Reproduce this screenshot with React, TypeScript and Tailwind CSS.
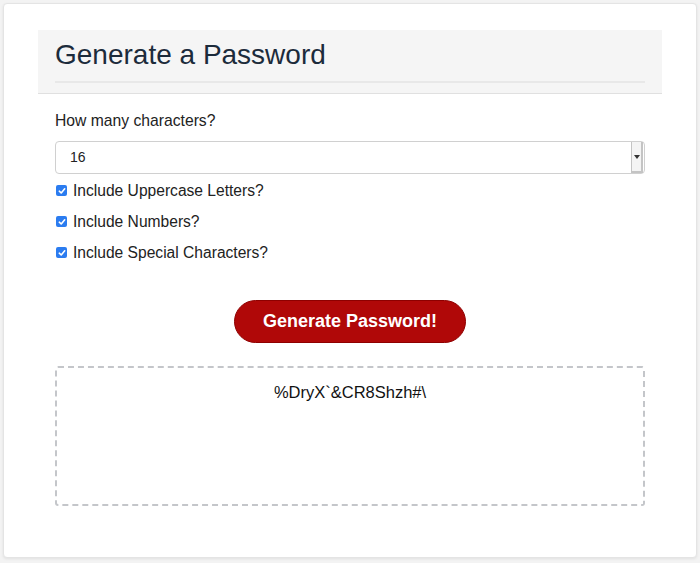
import React from "react";

const options = [
  "Include Uppercase Letters?",
  "Include Numbers?",
  "Include Special Characters?",
];

function Check() {
  return (
    <span className="flex h-[11px] w-[11px] items-center justify-center rounded-[2px] bg-[#2b7cf0]">
      <svg width="8" height="8" viewBox="0 0 8 8">
        <path d="M1.3 4.2 L3.2 6 L6.7 1.8" fill="none" stroke="#fff" strokeWidth="1.6" strokeLinecap="round" strokeLinejoin="round" />
      </svg>
    </span>
  );
}

export default function App() {
  return (
    <div className="min-h-[563px] w-[700px] bg-[#f3f3f3] p-[3px] font-['Liberation_Sans',Arial,sans-serif] text-[#222]">
      <div className="h-[555px] rounded-[4px] border border-[#e4e4e4] bg-white px-[34px] pt-[26px] shadow-[0_1px_3px_rgba(0,0,0,0.08)]">
        <div className="border-b border-[#e0e0e0] bg-[#f5f5f5] px-[17px] pt-[9px] pb-[10px]">
          <h1 className="text-[28px] leading-[31px] text-[#1c2b3b]">Generate a Password</h1>
          <div className="mt-[11px] h-[2px] bg-[#e8e8e8]" />
        </div>

        <div className="px-[17px] pt-[16px]">
          <div className="text-[15.7px] leading-[21px] text-[#222]">How many characters?</div>
          <div className="mt-[10px] flex h-[33px] items-center rounded-[4px] border border-[#d0d0d0] bg-white pl-[14px] pr-[1px]">
            <span className="flex-1 text-[14px] text-[#222]">16</span>
            <span className="flex h-[31px] w-[12px] items-center justify-center border-l border-r-2 border-b-2 border-[#c4c4c4] bg-[#f4f4f4]">
              <svg width="6" height="4" viewBox="0 0 6 4">
                <path d="M0 0 L6 0 L3 4 Z" fill="#333" />
              </svg>
            </span>
          </div>

          <div className="mt-[1px] flex flex-col">
            {options.map((o) => (
              <label key={o} className="flex h-[31px] items-center gap-[6px] pl-[1px]">
                <Check />
                <span className="text-[15.6px] text-[#222]">{o}</span>
              </label>
            ))}
          </div>

          <div className="mt-[32px] flex justify-center">
            <button className="h-[43px] w-[232px] rounded-full border border-[#8e0000] bg-[#b00808] text-[18px] font-bold text-white">
              Generate Password!
            </button>
          </div>

          <div className="mt-[23px] flex h-[140px] justify-center rounded-[3px] border-2 border-dashed border-[#c4c6ca] pt-[14px]">
            <span className="text-[16.5px] leading-[20px] text-[#111]">%DryX`&amp;CR8Shzh#\</span>
          </div>
        </div>
      </div>
    </div>
  );
}
